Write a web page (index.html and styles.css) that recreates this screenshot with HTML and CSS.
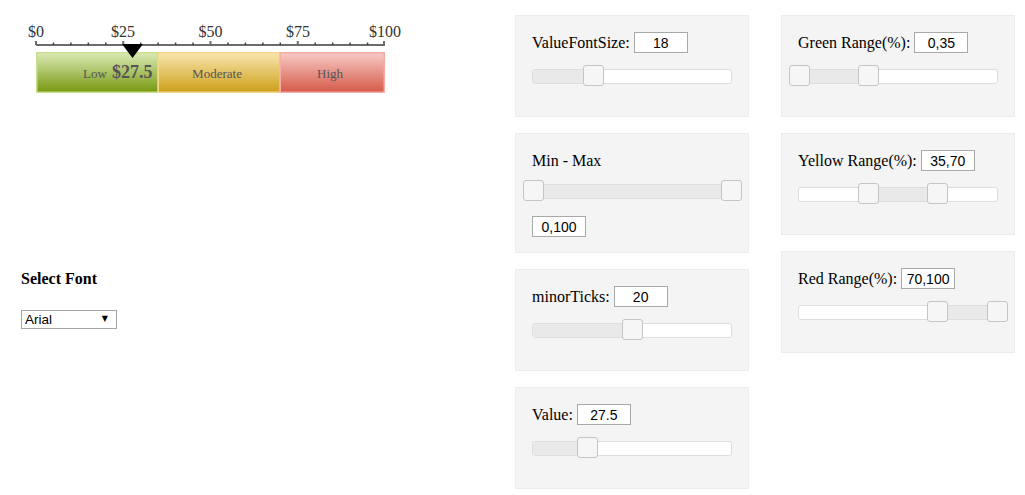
FILE: index.html
```html
<!DOCTYPE html>
<html>
<head>
<meta charset="utf-8">
<link rel="stylesheet" href="styles.css">
</head>
<body>
<div class="page">
  <div class="left">
    <svg class="gauge" width="515" height="100" viewBox="0 0 515 100">
      <defs>
        <linearGradient id="gLow" x1="0" y1="0" x2="0" y2="1">
          <stop offset="0" stop-color="#dbeab6"/>
          <stop offset="1" stop-color="#76990f"/>
        </linearGradient>
        <linearGradient id="gMod" x1="0" y1="0" x2="0" y2="1">
          <stop offset="0" stop-color="#f8e6ae"/>
          <stop offset="1" stop-color="#cd9f19"/>
        </linearGradient>
        <linearGradient id="gHigh" x1="0" y1="0" x2="0" y2="1">
          <stop offset="0" stop-color="#f8cac6"/>
          <stop offset="1" stop-color="#d55a48"/>
        </linearGradient>
      </defs>
      <g class="labels">
        <text x="36" y="37">$0</text>
        <text x="123" y="37">$25</text>
        <text x="210.5" y="37">$50</text>
        <text x="298" y="37">$75</text>
        <text x="385" y="37">$100</text>
      </g>
      <line x1="36" y1="45" x2="385" y2="45" stroke="#6b6b6b" stroke-width="2"/>
      <g stroke="#6b6b6b" stroke-width="2">
        <line x1="36" y1="41" x2="36" y2="45"/>
        <line x1="123.25" y1="41" x2="123.25" y2="45"/>
        <line x1="210.5" y1="41" x2="210.5" y2="45"/>
        <line x1="297.75" y1="41" x2="297.75" y2="45"/>
        <line x1="384" y1="41" x2="384" y2="45"/>
      </g>
      <g stroke="#444" stroke-width="1.5">
        <line x1="53.45" y1="42.5" x2="53.45" y2="45"/>
        <line x1="70.9" y1="42.5" x2="70.9" y2="45"/>
        <line x1="88.35" y1="42.5" x2="88.35" y2="45"/>
        <line x1="105.8" y1="42.5" x2="105.8" y2="45"/>
        <line x1="140.7" y1="42.5" x2="140.7" y2="45"/>
        <line x1="158.15" y1="42.5" x2="158.15" y2="45"/>
        <line x1="175.6" y1="42.5" x2="175.6" y2="45"/>
        <line x1="193.05" y1="42.5" x2="193.05" y2="45"/>
        <line x1="227.95" y1="42.5" x2="227.95" y2="45"/>
        <line x1="245.4" y1="42.5" x2="245.4" y2="45"/>
        <line x1="262.85" y1="42.5" x2="262.85" y2="45"/>
        <line x1="280.3" y1="42.5" x2="280.3" y2="45"/>
        <line x1="315.2" y1="42.5" x2="315.2" y2="45"/>
        <line x1="332.65" y1="42.5" x2="332.65" y2="45"/>
        <line x1="350.1" y1="42.5" x2="350.1" y2="45"/>
        <line x1="367.55" y1="42.5" x2="367.55" y2="45"/>
      </g>
      <rect x="36.75" y="52.75" width="121.5" height="39.5" fill="url(#gLow)" stroke="#c9e08e" stroke-width="1.5"/>
      <rect x="158.25" y="52.75" width="122" height="39.5" fill="url(#gMod)" stroke="#f4d98c" stroke-width="1.5"/>
      <rect x="280.25" y="52.75" width="104" height="39.5" fill="url(#gHigh)" stroke="#f5aca4" stroke-width="1.5"/>
      <text class="seg" x="83" y="78">Low</text>
      <text class="val" x="112" y="78">$27.5</text>
      <text class="seg" x="217" y="78" text-anchor="middle">Moderate</text>
      <text class="seg" x="330" y="78" text-anchor="middle">High</text>
      <polygon points="122,44 143,44 132.5,58" fill="#000"/>
    </svg>
    <div class="font-picker">
      <div class="font-title">Select Font</div>
      <div class="select-wrap">
        <select class="font-select">
          <option>Arial</option>
          <option>Times New Roman</option>
          <option>Verdana</option>
        </select>
      </div>
    </div>
  </div>

  <div class="controls">
    <div class="col">
      <div class="panel">
        <div class="row"><span>ValueFontSize:</span><input class="num" value="18"></div>
        <div class="slider">
          <div class="range" style="left:0;width:30.5%"></div>
          <span class="handle" style="left:30.5%"></span>
        </div>
      </div>
      <div class="panel panel-mm">
        <div class="row"><span>Min - Max</span></div>
        <div class="slider">
          <div class="range" style="left:0;width:100%"></div>
          <span class="handle" style="left:0%"></span>
          <span class="handle" style="left:100%"></span>
        </div>
        <input class="num" value="0,100">
      </div>
      <div class="panel">
        <div class="row"><span>minorTicks:</span><input class="num" value="20"></div>
        <div class="slider">
          <div class="range" style="left:0;width:50%"></div>
          <span class="handle" style="left:50%"></span>
        </div>
      </div>
      <div class="panel">
        <div class="row"><span>Value:</span><input class="num" value="27.5"></div>
        <div class="slider">
          <div class="range" style="left:0;width:27.5%"></div>
          <span class="handle" style="left:27.5%"></span>
        </div>
      </div>
    </div>
    <div class="col">
      <div class="panel">
        <div class="row"><span>Green Range(%):</span><input class="num" value="0,35"></div>
        <div class="slider">
          <div class="range" style="left:0;width:35%"></div>
          <span class="handle" style="left:0%"></span>
          <span class="handle" style="left:35%"></span>
        </div>
      </div>
      <div class="panel">
        <div class="row"><span>Yellow Range(%):</span><input class="num" value="35,70"></div>
        <div class="slider">
          <div class="range" style="left:35%;width:35%"></div>
          <span class="handle" style="left:35%"></span>
          <span class="handle" style="left:70%"></span>
        </div>
      </div>
      <div class="panel">
        <div class="row"><span>Red Range(%):</span><input class="num" value="70,100"></div>
        <div class="slider">
          <div class="range" style="left:70%;width:30%"></div>
          <span class="handle" style="left:70%"></span>
          <span class="handle" style="left:100%"></span>
        </div>
      </div>
    </div>
  </div>
</div>
</body>
</html>
```
FILE: styles.css
```css
html, body {
  margin: 0;
  padding: 0;
  background: #fff;
}

body {
  font-family: "Liberation Serif", "Times New Roman", serif;
  font-size: 16px;
  color: #000;
}

.page {
  display: flex;
  align-items: flex-start;
}

.left {
  width: 515px;
  flex: none;
}

.gauge {
  display: block;
}

.gauge .labels text {
  font-family: "Liberation Serif", serif;
  font-size: 16px;
  fill: #333;
  text-anchor: middle;
}

.gauge .seg {
  font-family: "Liberation Serif", serif;
  font-size: 13px;
  fill: #555;
}

.gauge .val {
  font-family: "Liberation Serif", serif;
  font-size: 18px;
  font-weight: bold;
  fill: #555;
}

.font-picker {
  padding-left: 21px;
  margin-top: 170px;
}

.font-title {
  font-weight: bold;
  font-size: 16px;
  line-height: 18px;
}

.select-wrap {
  position: relative;
  width: 96px;
  margin-top: 22px;
}

.select-wrap::after {
  content: "\25BC";
  position: absolute;
  right: 9px;
  top: 4px;
  font-size: 8px;
  font-family: "DejaVu Sans", sans-serif;
  pointer-events: none;
  color: #000;
}

.font-select {
  appearance: none;
  -webkit-appearance: none;
  display: block;
  width: 96px;
  height: 19px;
  box-sizing: border-box;
  border: 1px solid #a6a6a6;
  border-radius: 0;
  background: #fff;
  font-family: "Liberation Sans", Arial, sans-serif;
  font-size: 13.5px;
  padding: 0 0 0 3px;
  color: #000;
  line-height: 17px;
}

.controls {
  display: flex;
  gap: 32px;
  padding-top: 15px;
}

.col {
  display: flex;
  flex-direction: column;
  gap: 16px;
  width: 234px;
}

.panel {
  box-sizing: border-box;
  width: 234px;
  background: #f4f4f4;
  border: 1px solid #ededed;
  padding: 16px 16px 32px;
}

.row {
  display: flex;
  align-items: center;
  height: 21px;
  font-size: 16px;
  line-height: 18px;
}

.row .num {
  margin-left: 4px;
}

.num {
  display: block;
  box-sizing: border-box;
  width: 54px;
  height: 21px;
  border: 1px solid #a9a9a9;
  border-radius: 0;
  background: #fff;
  padding: 0;
  margin: 0;
  text-align: center;
  font-family: "Liberation Sans", Arial, sans-serif;
  font-size: 14px;
  color: #000;
}

.slider {
  position: relative;
  width: 198px;
  height: 13px;
  margin-top: 16px;
  background: #fff;
  border: 1px solid #dddddd;
  border-radius: 3px;
}

.range {
  position: absolute;
  top: 0;
  height: 100%;
  background: #e9e9e9;
  border-radius: 3px;
}

.handle {
  position: absolute;
  top: -5px;
  width: 19px;
  height: 19px;
  margin-left: -10.5px;
  background: #f6f6f6;
  border: 1px solid #c5c5c5;
  border-radius: 3px;
}

.panel-mm {
  padding-bottom: 15px;
}

.panel-mm .slider {
  margin-top: 13px;
}

.panel-mm .num {
  margin-top: 17px;
}
```
